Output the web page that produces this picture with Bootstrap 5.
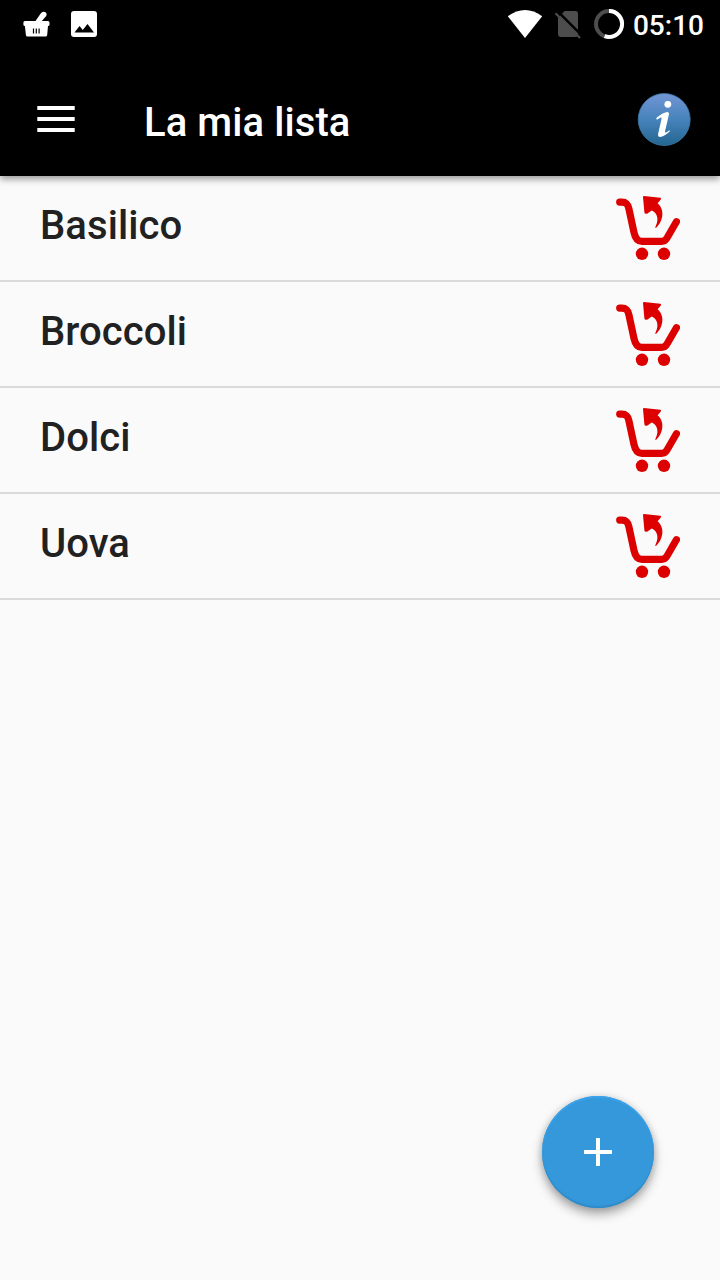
<!DOCTYPE html>
<html lang="it">
<head>
<meta charset="utf-8">
<meta name="viewport" content="width=device-width, initial-scale=1">
<title>La mia lista</title>
<link href="https://cdn.jsdelivr.net/npm/bootstrap@5.3.0/dist/css/bootstrap.min.css" rel="stylesheet">
<style>
body{font-family:Roboto,sans-serif;background:#fafafa;color:#212121}
svg{display:block;flex:none}
.status-bar{height:48px;background:#000;color:#fff;padding:0 16px 0 20px}
.status-time{font-size:28px;font-weight:500;line-height:1;margin-left:5px;padding-top:3px}
.app-bar{height:128px;background:#000;padding:14px 28px 0 36px;box-shadow:0 3px 7px rgba(0,0,0,.4);position:relative;z-index:1}
.app-title{font-size:40px;font-weight:500;line-height:48px;letter-spacing:.08px;color:#fff;margin:7px 0 0 68px}
.shopping-list .list-group-item{height:106px;padding:18px 40px 0;background:#fafafa;color:#212121;border:0;border-bottom:2px solid #dadada!important;font-size:40px;font-weight:500;line-height:64px;letter-spacing:.08px}
.fab{right:66px;bottom:72px;width:112px;height:112px;background:#3498db;border:0;box-shadow:0 6px 11px rgba(0,0,0,.34),0 0 9px rgba(0,0,0,.13),inset 0 2px 1px #3ba2ea,inset 0 -2px 1px #2f8bc9}
</style>
</head>
<body class="vh-100 overflow-hidden">
<svg width="0" height="0" class="position-absolute">
  <symbol id="cart" viewBox="0 0 64 64">
    <path d="M3.7 6.1H6C10.5 6.1 12 8.6 12.9 12.8L18 36.5Q19.8 45.4 26 45.4H45.5Q49 45.4 51 42L60.4 25.7" fill="none" stroke="#d00" stroke-width="7.2" stroke-linecap="round" stroke-linejoin="round"/>
    <circle cx="26" cy="57.8" r="6.2" fill="#d00"/><circle cx="48" cy="57.8" r="6.2" fill="#d00"/>
    <path d="M28 0L44.3 1.8Q45.6 2.1 44.8 3.4L41.6 7.3C45.4 10.8 47 15.2 46.2 20.5C45.5 25.2 43 29 40 32C39.2 32 39.2 31 39.7 30.2C41.6 26.5 42 22.7 40.6 19.3C39.4 16.7 37.8 15.4 35.7 14.6L31.5 17.6Q28.7 18.3 28.4 16.5L27 1Q27 0 28 0Z" fill="#d00"/>
  </symbol>
</svg>
<div class="status-bar d-flex align-items-center">
  <svg width="100" height="48" viewBox="20 0 100 48" fill="#fff">
    <path d="M25 21H35.5L40.7 13.5Q42.4 11 45 12.1Q47.5 13.7 46.2 16L41.8 21H48Q49.5 21 49.5 22.5V24.5Q49.5 26 48 26L47.2 35Q47 36.5 45.5 36.5H27.5Q26.1 36.5 25.9 35L24.9 26Q23.4 26 23.4 24.5V22.5Q23.4 21 25 21Z"/>
    <path d="M33.5 28.5V33.5M36.3 28.5V33.5M39.1 28.5V33.5" stroke="#000" stroke-width="1.2"/>
    <rect x="71" y="11" width="26" height="26" rx="3"/>
    <path d="M74.5 32.5L79.5 26L82.8 30.1L87.5 24L94 32.5Z" fill="#000"/>
  </svg>
  <svg class="ms-auto" width="125" height="48" viewBox="503 0 125 48">
    <path d="M507.8 16.2Q525 3.6 542.2 16.2L525 38Z" fill="#fff"/>
    <path d="M564.7 11H575.3Q578 11 578 13.7V34Q578 37 575 37H561Q558 37 558 34V17.7Z" fill="#4d4d4d"/>
    <path d="M557.5 11.2L582.5 36.2" stroke="#000" stroke-width="2.5"/>
    <path d="M555.5 13.2L580 38" stroke="#4d4d4d" stroke-width="2.2"/>
    <circle cx="609" cy="24" r="13" fill="none" stroke="#4d4d4d" stroke-width="4"/>
    <path d="M609 11A13 13 0 1 1 604.6 36.2" fill="none" stroke="#fff" stroke-width="4"/>
  </svg>
  <span class="status-time">05:10</span>
</div>
<nav class="app-bar d-flex align-items-center">
  <svg width="40" height="28" viewBox="0 0 40 28" fill="#fff"><path d="M1.3 1H38.7V5H1.3ZM1.3 12H38.7V16H1.3ZM1.3 23H38.7V27H1.3Z"/></svg>
  <h1 class="app-title">La mia lista</h1>
  <svg class="ms-auto" width="56" height="56" viewBox="0 -1 56 56">
    <defs><linearGradient id="info" x2="0" y2="1"><stop stop-color="#7396d5"/><stop offset=".5" stop-color="#4683bc"/><stop offset="1" stop-color="#24658f"/></linearGradient></defs>
    <circle cx="28.2" cy="27.5" r="26" fill="url(#info)" stroke="#3a77a8" stroke-width=".8"/>
    <g fill="#fff"><circle cx="31.8" cy="12.3" r="3.4"/><path d="M20.2 26.3C23.5 23.3 28 20.3 31.6 20.1Q33.4 20.2 32.9 22.5L29.1 39.2Q28.8 41.3 30.6 40.2L33.3 38.2L33.9 39.3C30.5 42.3 26.9 45 24 45Q21.8 44.8 22.1 41.9L25.5 26.9Q26 24.8 24.2 25.7L20.8 27.7Z"/></g>
  </svg>
</nav>
<ul class="list-group list-group-flush shopping-list">
  <li class="list-group-item d-flex justify-content-between"><span>Basilico</span><svg width="64" height="68" viewBox="0 -2 64 68"><use href="#cart" width="64" height="64"/></svg></li>
  <li class="list-group-item d-flex justify-content-between"><span>Broccoli</span><svg width="64" height="68" viewBox="0 -2 64 68"><use href="#cart" width="64" height="64"/></svg></li>
  <li class="list-group-item d-flex justify-content-between"><span>Dolci</span><svg width="64" height="68" viewBox="0 -2 64 68"><use href="#cart" width="64" height="64"/></svg></li>
  <li class="list-group-item d-flex justify-content-between"><span>Uova</span><svg width="64" height="68" viewBox="0 -2 64 68"><use href="#cart" width="64" height="64"/></svg></li>
</ul>
<button class="fab position-fixed rounded-circle d-flex align-items-center justify-content-center p-0" aria-label="Aggiungi">
  <svg width="28" height="28" viewBox="0 0 28 28"><path d="M12 0H16V12H28V16H16V28H12V16H0V12H12Z" fill="#fff"/></svg>
</button>
<script src="https://cdn.jsdelivr.net/npm/bootstrap@5.3.0/dist/js/bootstrap.bundle.min.js"></script>
</body>
</html>
